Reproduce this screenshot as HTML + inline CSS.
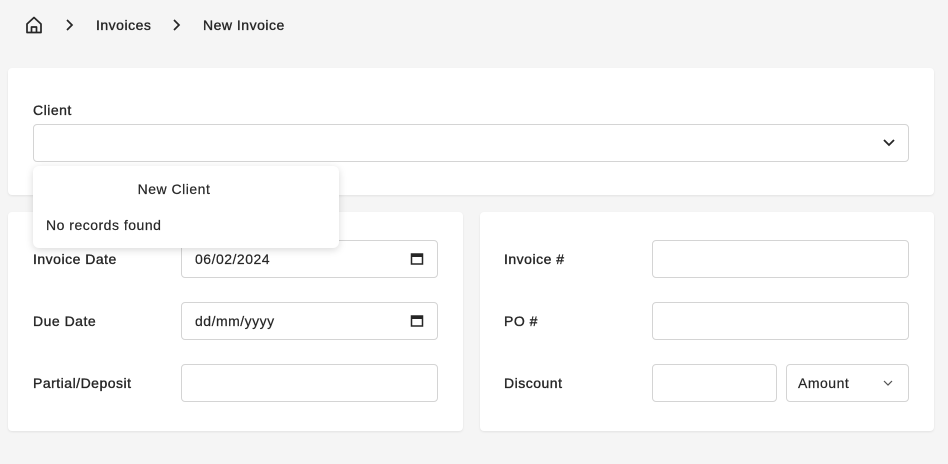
<!DOCTYPE html><html><head><style>
*{box-sizing:border-box;margin:0;padding:0}
body{width:948px;height:464px;background:#f5f5f5;font-family:"Liberation Sans",sans-serif;font-size:14px;color:#262626;position:relative;overflow:hidden;letter-spacing:.5px;-webkit-text-stroke:.2px #262626}
.a{position:absolute}
.card{position:absolute;background:#fff;border-radius:4px;box-shadow:0 1px 2px rgba(0,0,0,.08)}
.in{position:absolute;background:#fff;border:1px solid #d4d4d4;border-radius:4px;height:38px}
.lb{position:absolute;font-size:14px;color:#262626;-webkit-text-stroke:.35px #262626}
</style></head><body>
<svg class="a" style="left:24px;top:15px" width="20" height="20" viewBox="0 0 20 20" fill="none" stroke="#262626" stroke-width="1.7" stroke-linejoin="round"><path d="M3 9 L10 2.5 L17 9 V17.5 H3 Z"/><path d="M7.5 17.5 V12 H12.5 V17.5"/></svg>
<svg class="a" style="left:64px;top:18px" width="12" height="14" viewBox="0 0 12 14" fill="none" stroke="#262626" stroke-width="1.7"><path d="M3 2 L8 7 L3 12"/></svg>
<div class="lb" style="left:96px;top:17px">Invoices</div>
<svg class="a" style="left:171px;top:18px" width="12" height="14" viewBox="0 0 12 14" fill="none" stroke="#262626" stroke-width="1.7"><path d="M3 2 L8 7 L3 12"/></svg>
<div class="lb" style="left:203px;top:17px">New Invoice</div>

<div class="card" style="left:8px;top:68px;width:926px;height:127px"></div>
<div class="lb" style="left:33px;top:102px">Client</div>
<div class="in" style="left:33px;top:124px;width:876px"></div>
<svg class="a" style="left:882px;top:137px" width="14" height="12" viewBox="0 0 14 12" fill="none" stroke="#262626" stroke-width="1.8"><path d="M2 3 L7 8 L12 3"/></svg>

<div class="card" style="left:8px;top:212px;width:455px;height:219px"></div>
<div class="card" style="left:480px;top:212px;width:454px;height:219px"></div>

<div class="lb" style="left:33px;top:251px">Invoice Date</div>
<div class="in" style="left:181px;top:240px;width:257px"></div>
<div class="a" style="left:195px;top:251px">06/02/2024</div>
<div class="lb" style="left:33px;top:313px">Due Date</div>
<div class="in" style="left:181px;top:302px;width:257px"></div>
<div class="a" style="left:195px;top:313px">dd/mm/yyyy</div>
<svg class="a" style="left:410px;top:252px" width="14" height="14" viewBox="0 0 14 14"><rect x="1.5" y="2" width="11" height="10" fill="none" stroke="#262626" stroke-width="1.5"/><rect x="1.5" y="2" width="11" height="3" fill="#262626"/></svg>
<svg class="a" style="left:410px;top:314px" width="14" height="14" viewBox="0 0 14 14"><rect x="1.5" y="2" width="11" height="10" fill="none" stroke="#262626" stroke-width="1.5"/><rect x="1.5" y="2" width="11" height="3" fill="#262626"/></svg>
<div class="lb" style="left:33px;top:375px">Partial/Deposit</div>
<div class="in" style="left:181px;top:364px;width:257px"></div>

<div class="lb" style="left:504px;top:251px">Invoice #</div>
<div class="in" style="left:652px;top:240px;width:257px"></div>
<div class="lb" style="left:504px;top:313px">PO #</div>
<div class="in" style="left:652px;top:302px;width:257px"></div>
<div class="lb" style="left:504px;top:375px">Discount</div>
<div class="in" style="left:652px;top:364px;width:125px"></div>
<div class="in" style="left:786px;top:364px;width:123px"></div>
<div class="a" style="left:798px;top:375px">Amount</div>
<svg class="a" style="left:882px;top:377px" width="12" height="12" viewBox="0 0 12 12" fill="none" stroke="#525252" stroke-width="1.2"><path d="M2 4 L6 8 L10 4"/></svg>

<div class="a" style="left:33px;top:166px;width:306px;height:82px;background:#fff;border-radius:6px;box-shadow:0 2px 8px rgba(0,0,0,.15)"></div>
<div class="a" style="left:33px;top:181px;width:282px;text-align:center">New Client</div>
<div class="a" style="left:46px;top:217px">No records found</div>
</body></html>
